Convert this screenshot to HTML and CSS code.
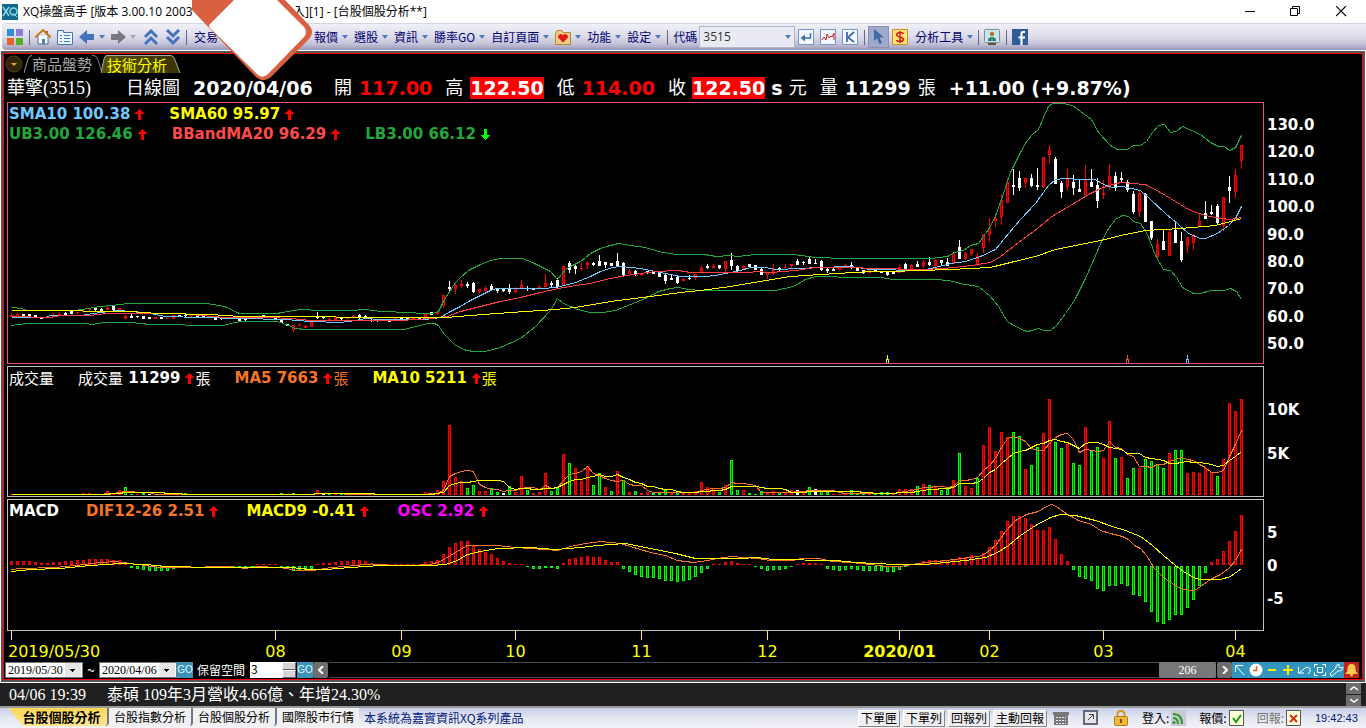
FILE: index.html
```html
<!DOCTYPE html>
<html lang="zh-Hant">
<head>
    <meta charset="UTF-8">
    <meta name="viewport" content="width=device-width, initial-scale=1.0">
    <title>XQ操盤高手</title>
    <link rel="stylesheet" href="styles.css">
</head>
<body>
    <!-- Shared symbols -->
    <svg class="defs" aria-hidden="true">
        <symbol id="up" viewBox="0 0 9 11"><path d="M4 0h1v1h1v1h1v1h1v1h1v1H6v6H3V5H0V4h1V3h1V2h1V1h1z"/></symbol>
        <symbol id="down" viewBox="0 0 9 11"><path d="M3 0h3v6h3v1H8v1H7v1H6v1H5v1H4v-1H3V9H2V8H1V7H0V6h3z"/></symbol>
        <symbol id="caret" viewBox="0 0 7 4"><path d="M0 0h6L3 4z"/></symbol>
    </svg>

    <!-- Title bar -->
    <header class="titlebar">
        <svg class="app-icon" width="16" height="16"><rect width="16" height="16" fill="#0f6a8c"/><path d="M1 3l6 9M7 3l-6 9" stroke="#8fd6ea" stroke-width="1.500"/><circle cx="11.500" cy="7.500" r="3.500" fill="none" stroke="#8fd6ea" stroke-width="1.500"/><path d="M11 9l4 4" stroke="#8fd6ea"/></svg>
        <span class="title-start">XQ操盤高手 [版本 3.00.10 2003</span>
        <span class="title-end">入][1] - [台股個股分析**]</span>
        <div class="window-buttons">
            <button aria-label="最小化"><svg width="12" height="12"><path d="M1 5.500h10" stroke="#000"/></svg></button>
            <button aria-label="還原"><svg width="12" height="12" fill="none" stroke="#000"><path d="M.5 2.500h7v7h-7zM2.500 2.500V.500h7v7H8"/></svg></button>
            <button aria-label="關閉"><svg width="12" height="12"><path d="M0 0l10 10M10 0L0 10" stroke="#000" stroke-width="1.100"/></svg></button>
        </div>
    </header>

    <svg class="logo-overlay" width="130" height="84" viewBox="190 0 130 84"><path fill="#d96142" d="M192 0V10L255 76Q263 84 271 77L309 39Q315 32 309 25L285 0z"/><path fill="#fff" d="M234 0L210 24Q208 26 210 28L258 75Q263 79 268 74L304 37Q308 32 304 27L277 0z"/></svg>

    <!-- Toolbar -->
    <nav class="toolbar">
        <button class="icon" aria-label="主選單"><svg width="16" height="16"><path fill="#2f8fd0" d="M0 0h7v7H0z"/><path fill="#8d7fd0" d="M9 0h7v7H9z"/><path fill="#e0642c" d="M0 9h7v7H0z"/><path fill="#55ae28" d="M9 9h7v7H9z"/></svg></button>
        <i class="sep"></i>
        <button class="icon" aria-label="首頁"><svg width="16" height="16"><path d="M3 7v8h10V7" fill="#fff" stroke="#486a9c"/><path d="M12 2v4" stroke="#a86018" stroke-width="2"/><path d="M0 8.500L8 1l8 7.500" fill="none" stroke="#c67a18" stroke-width="2"/><path d="M7 10h3v5H7z" fill="#4c82be"/></svg></button>
        <button class="icon" aria-label="清單"><svg width="16" height="16"><path d="M.5 1.500h6v2h9v12H.5z" fill="#eef6ff" stroke="#3f78b8"/><path d="M3 6.500h2m2 0h6M3 9.500h2m2 0h6M3 12.500h2m2 0h6" stroke="#3f78b8"/></svg></button>
        <button class="icon history" aria-label="上一頁"><svg width="16" height="14"><path d="M0 7l8-7v4h7v6H8v4z" fill="#4470bc"/></svg><svg class="caret"><use href="#caret"/></svg></button>
        <button class="icon history off" aria-label="下一頁"><svg width="16" height="14"><path d="M16 7L8 0v4H1v6h7v4z" fill="#78787e"/></svg><svg class="caret"><use href="#caret"/></svg></button>
        <button class="icon jump" aria-label="往上"><svg width="14" height="16" fill="none" stroke="#4470bc" stroke-width="3"><path d="M1 8l6-6 6 6M1 15l6-6 6 6"/></svg></button>
        <button class="icon jump" aria-label="往下"><svg width="14" height="16" fill="none" stroke="#4470bc" stroke-width="3"><path d="M1 1l6 6 6-6M1 8l6 6 6-6"/></svg></button>
        <i class="sep"></i>
        <button class="menu trade">交易</button>
        <button class="menu">報價<svg class="caret"><use href="#caret"/></svg></button>
        <button class="menu">選股<svg class="caret"><use href="#caret"/></svg></button>
        <button class="menu">資訊<svg class="caret"><use href="#caret"/></svg></button>
        <button class="menu">勝率GO<svg class="caret"><use href="#caret"/></svg></button>
        <button class="menu">自訂頁面<svg class="caret"><use href="#caret"/></svg></button>
        <button class="menu" aria-label="我的最愛"><svg width="16" height="15"><path d="M.5 3.500v11h15V2.500H8l-1-2H2z" fill="#f1cc85" stroke="#b98534"/><path d="M8 12.500L3.500 8a2.200 2.200 0 0 1 4.500-2.500A2.200 2.200 0 0 1 12.500 8z" fill="#e01818"/></svg><svg class="caret"><use href="#caret"/></svg></button>
        <button class="menu">功能<svg class="caret"><use href="#caret"/></svg></button>
        <button class="menu">設定<svg class="caret"><use href="#caret"/></svg></button>
        <i class="sep"></i>
        <label for="symbol">代碼</label>
        <div class="combo"><input id="symbol" value="3515"><svg class="caret"><use href="#caret"/></svg></div>
        <button class="icon tool" aria-label="輸入"><svg width="16" height="16"><path d="M.5.500h15v15H.5z" fill="#f3f8ff" stroke="#7197c8"/><path d="M12.500 4v5H4" fill="none" stroke="#3e6eb0" stroke-width="1.500"/><path d="M7 5.500v7L2.500 9z" fill="#3e6eb0"/></svg></button>
        <button class="icon tool" aria-label="走勢圖"><svg width="16" height="16"><path d="M.5.500h15v15H.5z" fill="#f3f8ff" stroke="#7197c8"/><path d="M2 11l2-3 2 3 1-6 2 4 2-2 1 1 2-4v7" fill="none" stroke="#c81c1c"/></svg></button>
        <button class="icon tool" aria-label="K線圖"><svg width="16" height="16"><path d="M.5.500h15v15H.5z" fill="#f3f8ff" stroke="#7197c8"/><path d="M5 3v10M12 3L6 8.500 12 13" fill="none" stroke="#3e6eb0" stroke-width="1.800"/></svg></button>
        <i class="sep"></i>
        <button class="icon pressed" aria-label="游標"><svg width="12" height="16"><path d="M1 0v12l3-3 2.500 6 2.500-1-2.500-5.500H11z" fill="#3e69a8"/></svg></button>
        <button class="icon" aria-label="下單"><svg width="16" height="16"><path d="M.5.500h15v15H.5z" fill="#ffe479" stroke="#cf8a20"/><path d="M11.500 5Q11 3.500 8 3.500T4.500 6Q5 7.500 8 8t3.500 2.500Q11 12.500 8 12.500T4.500 11M8 2v12" fill="none" stroke="#d42010" stroke-width="1.500"/></svg></button>
        <button class="menu tools">分析工具<svg class="caret"><use href="#caret"/></svg></button>
        <i class="sep"></i>
        <button class="icon" aria-label="客服"><svg width="16" height="16"><rect x=".5" y=".5" width="15" height="13" rx="1" fill="#c7e8ee" stroke="#8a8a86"/><circle cx="8" cy="5" r="2.200" fill="#b86f3e"/><path d="M4 12q0-4 4-4t4 4z" fill="#267098"/><path d="M8 8v4" stroke="#3caa4a" stroke-width="2"/><path d="M4 15h8" stroke="#55554f" stroke-width="2"/></svg></button>
        <i class="sep"></i>
        <button class="icon" aria-label="Facebook"><svg width="16" height="16"><path fill="#315a9b" d="M0 0h16v16H0z"/><path d="M13 3h-2Q9.500 3 9.500 5v11M6.500 8.500H13" fill="none" stroke="#fff" stroke-width="2.200"/></svg></button>
    </nav>

    <main class="frame">
        <div class="page-tabs">
            <button class="tab-menu" aria-label="頁籤選單"><svg width="18" height="18"><circle cx="9" cy="9" r="8" fill="#2e2708" stroke="#4b4218"/><path d="M6 8h6l-3 3z" fill="#e0a824"/></svg></button>
            <button class="page-tab"><svg width="8" height="18"><path d="M0 18L4 4Q5 .5 8 .5" fill="none" stroke="#999"/></svg>商品盤勢<svg width="11" height="18"><path d="M0 .5h2Q5 1 6 5l4 13" fill="none" stroke="#777"/></svg></button>
            <button class="page-tab active"><svg width="6" height="18"><path d="M0 18L3 4Q4 0 6 0v18z" fill="#555000"/><path d="M0 18L3 4Q4 .5 6 .5" fill="none" stroke="#aaa"/></svg><span>技術分析</span><svg width="14" height="18"><path d="M0 0h4Q7 1 8 5l5 13H0z" fill="#3c3700"/><path d="M0 .5h4Q7 1 8 5l5 13" fill="none" stroke="#aaa"/></svg></button>
        </div>

        <div class="quote">
            <span class="stock-name">華擎(3515)</span>
            <span class="period">日線圖</span>
            <b class="date">2020/04/06</b>
            <div>開<b class="rise">117.00</b></div>
            <div>高<b class="limit">122.50</b></div>
            <div>低<b class="rise">114.00</b></div>
            <div class="close">收<b class="limit">122.50</b><b>s</b>元</div>
            <div>量<b>11299</b>張</div>
            <b>+11.00 (+9.87%)</b>
        </div>

        <section class="pane price">
            <div class="plot">
                <svg id="price" viewBox="7 102 1257 262" preserveAspectRatio="none"></svg>
                <div class="legend">
                    <span class="sky">SMA10 100.38<svg class="up"><use href="#up"/></svg></span>
                    <span class="yellow">SMA60 95.97<svg class="up"><use href="#up"/></svg></span>
                </div>
                <div class="legend second">
                    <span class="band">UB3.00 126.46<svg class="up"><use href="#up"/></svg></span>
                    <span class="coral">BBandMA20 96.29<svg class="up"><use href="#up"/></svg></span>
                    <span class="band">LB3.00 66.12<svg class="down"><use href="#down"/></svg></span>
                </div>
            </div>
            <div class="scale"><span>130.0</span><span>120.0</span><span>110.0</span><span>100.0</span><span>90.0</span><span>80.0</span><span>70.0</span><span>60.0</span><span>50.0</span></div>
        </section>

        <section class="pane volume">
            <div class="plot">
                <svg id="volume" viewBox="7 366 1257 131" preserveAspectRatio="none"></svg>
                <div class="legend">
                    <span><em>成交量</em></span>
                    <span><em>成交量</em>&nbsp;11299<svg class="up"><use href="#up"/></svg><em>張</em></span>
                    <span class="orange">MA5 7663<svg class="up"><use href="#up"/></svg><em>張</em></span>
                    <span class="yellow">MA10 5211<svg class="up"><use href="#up"/></svg><em>張</em></span>
                </div>
            </div>
            <div class="scale"><span>10K</span><span>5K</span></div>
        </section>

        <section class="pane macd">
            <div class="plot">
                <svg id="macd" viewBox="7 499 1257 132" preserveAspectRatio="none"></svg>
                <div class="legend wide">
                    <span>MACD</span>
                    <span class="orange">DIF12-26 2.51<svg class="up"><use href="#up"/></svg></span>
                    <span class="yellow">MACD9 -0.41<svg class="up"><use href="#up"/></svg></span>
                    <span class="magenta">OSC 2.92<svg class="up"><use href="#up"/></svg></span>
                </div>
            </div>
            <div class="scale"><span>5</span><span>0</span><span>-5</span></div>
        </section>

        <svg class="time-axis" id="axis"></svg>

        <!-- Date range and scrolling -->
        <div class="range">
            <select class="date-pick" aria-label="開始日期"><option>2019/05/30</option></select>
            <span class="tilde">~</span>
            <select class="date-pick" aria-label="結束日期"><option>2020/04/06</option></select>
            <button class="go">GO</button>
            <label for="margin">保留空間</label>
            <div class="spinner"><input id="margin" value="3"><button aria-label="增加"></button><button aria-label="減少"></button></div>
            <button class="go">GO</button>
            <button class="scroll-btn" aria-label="向左"><svg width="8" height="8"><path d="M6 0L2 4l4 4" fill="none" stroke="#fff" stroke-width="2"/></svg></button>
            <div class="track"><div class="thumb">206</div></div>
            <button class="scroll-btn" aria-label="向右"><svg width="8" height="8"><path d="M2 0l4 4-4 4" fill="none" stroke="#fff" stroke-width="2"/></svg></button>
            <div class="chart-tools">
                <button aria-label="指標"><svg width="16" height="16" fill="none" stroke="#fff"><path d="M3.500 10V3.500H11M4 4l8 9"/></svg></button>
                <button aria-label="時間"><svg width="16" height="16"><circle cx="8" cy="8" r="6.500" fill="#fff"/><path d="M8.500 4v4.500H5" fill="none" stroke="#d8642a" stroke-width="1.500"/></svg></button>
                <button aria-label="縮小"><svg width="16" height="16"><path d="M4 8h8" stroke="#ffee00" stroke-width="2"/></svg></button>
                <button aria-label="放大"><svg width="16" height="16"><path d="M3 8h10M8 3v10" stroke="#ffee00" stroke-width="2"/></svg></button>
                <button aria-label="復原"><svg width="16" height="16" fill="none" stroke="#fff"><path d="M2.500 5v6H8M3 11l6-5q4-2 5 1t-2 5"/></svg></button>
                <button aria-label="全圖"><svg width="16" height="16" fill="none" stroke="#fff"><path d="M2.500 5.500v-3h3M10.500 2.500h3v3M13.500 10.500v3h-3M5.500 13.500h-3v-3M5.500 5.500h5v5h-5z"/></svg></button>
                <button aria-label="設定"><svg width="16" height="16" fill="none" stroke="#fff"><path d="M3 14l-1-2 6-6q-1-3 3-4v3l2 1 2-1q0 4-5 4l-6 5z"/></svg></button>
                <button class="alarm" aria-label="警示"><svg width="15" height="16"><path d="M7.500 2q4 0 4 5 0 3 2 4v1h-12v-1q2-1 2-4 0-5 4-5z" fill="#f7cb52"/><circle cx="7.500" cy="13" r="1.500" fill="#f7cb52"/></svg></button>
            </div>
        </div>
    </main>

    <!-- News ticker -->
    <div class="news">
        <time>04/06 19:39</time>
        <span>泰碩 109年3月營收4.66億、年增24.30%</span>
        <div class="news-scroll">
            <button aria-label="上一則"><svg width="8" height="5"><path d="M0 4l4-3 4 3" fill="none" stroke="#fff" stroke-width="1.500"/></svg></button>
            <button aria-label="下一則"><svg width="8" height="5"><path d="M0 1l4 3 4-3" fill="none" stroke="#fff" stroke-width="1.500"/></svg></button>
        </div>
    </div>

    <!-- Status bar -->
    <footer class="status">
        <div class="sheets">
            <button class="sheet active">台股個股分析</button>
            <button class="sheet">台股指數分析</button>
            <button class="sheet">台股個股分析</button>
            <button class="sheet">國際股市行情</button>
        </div>
        <span class="notice">本系統為嘉實資訊XQ系列產品</span>
        <div class="orders">
            <button>下單匣</button><button>下單列</button><button>回報列</button><button>主動回報</button>
        </div>
        <div class="status-icons">
            <svg width="16" height="16"><path d="M0 2h16v3H0zM1 5h14v10H1z" fill="#77777c"/><path d="M3 7.500h10M3 10.500h10M3 13.500h10" stroke="#eee" stroke-dasharray="2 1"/></svg>
            <svg width="16" height="16"><path d="M1 1h13v13H1z" fill="#e6e6ea" stroke="#686876" stroke-width="2"/><path d="M5 10l5-5M6 4.500h4.500V9" fill="none" stroke="#444"/></svg>
            <svg width="16" height="16"><path d="M4.500 8V4q0-3 3.500-3t3.500 3v4" fill="none" stroke="#d49b22" stroke-width="2"/><rect x="1.500" y="6.500" width="13" height="9" rx="1" fill="#f0b938" stroke="#b67b16"/><path d="M8 9v4" stroke="#7d5308" stroke-width="2"/></svg>
        </div>
        <span class="state">登入:<svg width="15" height="16"><rect width="15" height="16" fill="#c9c9d1"/><path d="M2 4q9 0 9 10M2 8q5 0 5 6" fill="none" stroke="#2c9b2c" stroke-width="2"/><circle cx="3" cy="12.500" r="1.500" fill="#2c9b2c"/></svg></span>
        <span class="state">報價:<svg width="15" height="16"><path d="M.5.500h14v15H.5z" fill="#ffffd8" stroke="#555"/><path d="M4 8l3 4 5-7" fill="none" stroke="#159a15" stroke-width="2"/></svg></span>
        <span class="state idle">回報:<svg width="15" height="16"><path d="M.5.500h14v15H.5z" fill="#ffffd8" stroke="#555"/><path d="M4 5l7 7M11 5l-7 7" stroke="#e02a18" stroke-width="2"/></svg></span>
        <time class="clock">19:42:43</time>
    </footer>
    <script src="script.js"></script>
</body>
</html>
```

FILE: styles.css
```css
* {
    box-sizing: border-box;
}
body {
    margin: 0;
    background-color: #fff;
    font-family: "Noto Sans CJK TC", sans-serif;
    font-size: 12px;
    line-height: 16px;
    position: relative;
}
button, input, select {
    font: inherit;
    color: inherit;
    border: none;
    border-radius: 0;
    padding: 0;
    margin: 0;
    background: none;
}
svg {
    display: block;
    flex: none;
}
.defs {
    position: absolute;
    width: 0;
    height: 0;
}

/* Title bar */
.titlebar {
    display: flex;
    align-items: center;
    height: 23px;
    padding: 0 14px 0 2px;
    font-family: "Open Sans", "Noto Sans CJK TC", sans-serif;
    white-space: nowrap;
}
.title-start {
    width: 272px;
    padding-left: 5px;
}
.title-end {
    flex: 1;
    padding-left: 3px;
}
.window-buttons {
    display: flex;
    gap: 34px;
    padding-right: 4px;
}
.logo-overlay {
    position: absolute; /* Floats over the title, menu and tabs */
    left: 190px;
    top: 0;
    z-index: 2;
}

/* Toolbar */
.toolbar {
    display: flex;
    align-items: center;
    height: 27px;
    padding-left: 7px;
    margin-left: 2px;
    border-top: 1px solid #d4d4e4;
    border-radius: 4px 0 0 4px;
    background: linear-gradient(#f0f0f9, #dedeeb 45%, #c6c5d9 75%, #9b97b8);
    color: #00006e;
    white-space: nowrap;
}
.toolbar .icon {
    margin-right: 6px;
}
.toolbar .icon:first-child {
    margin-left: -2px;
}
.toolbar .history {
    display: flex;
    align-items: center;
    gap: 4px;
    margin-right: 4px;
}
.toolbar .jump {
    margin: 0 0 0 8px;
}
.toolbar .history + .jump {
    margin-left: 3px;
}
.toolbar .tool {
    margin: 0 0 0 6px;
}
.sep {
    width: 1px;
    height: 15px;
    margin: 0 5px 0 0;
    background-color: #66668e;
}
.jump + .sep, .tool + .sep {
    margin-left: 6px;
}
.menu {
    display: flex;
    align-items: center;
    gap: 4px;
    margin-right: 5px;
}
.trade {
    width: 117px;
    padding-left: 2px;
}
.tools {
    margin: 0 4px 0 1px;
}
.caret {
    width: 7px;
    height: 4px;
    fill: #5579b4;
}
.off .caret {
    fill: #aaa;
}
.combo {
    display: flex;
    align-items: center;
    width: 96px;
    height: 22px;
    margin: 0 -3px 0 2px;
    padding: 0 2px 0 3px;
    background-color: #eaeaf4;
    border: 1px solid #b5b5cc;
    color: #333;
    font-family: "Open Sans", sans-serif;
}
.combo input {
    flex: 1;
    min-width: 0;
}
.pressed {
    display: flex;
    justify-content: center;
    align-items: center;
    width: 21px;
    height: 22px;
    background-color: #9fa9cc;
    border: 1px solid #8b90b4;
}
.toolbar .pressed {
    margin-left: -2px;
    margin-right: 3px;
}

/* Chart frame */
.frame {
    margin: 3px 3px 0 3px;
    padding-left: 3px;
    border: 1px solid #ff0000;
    outline: 2px solid #555;
    background-color: #000;
    color: #fff;
}
.page-tabs {
    display: flex;
    align-items: center;
    height: 20px;
    margin-left: -2px;
}
.page-tab {
    display: flex;
    align-items: center;
    height: 18px;
    margin-left: 1px;
    font-size: 15px;
    line-height: 18px;
    color: #aaa;
}
.page-tab.active {
    color: #ffff00;
    margin-left: -2px;
}
.page-tab.active span {
    background: linear-gradient(90deg, #555000, #3c3700);
    border-top: 1px solid #aaa;
    height: 18px;
    line-height: 17px;
}
.quote {
    display: flex;
    align-items: center;
    gap: 13px;
    height: 28px;
    font-family: "Liberation Serif", "Noto Sans CJK TC", serif;
    font-size: 18px;
    line-height: 22px;
    white-space: nowrap;
}
.quote div {
    display: flex;
    gap: 7px;
}
.quote .close {
    gap: 6px;
}
.quote b {
    font-family: "DejaVu Sans", sans-serif;
    font-size: 19px;
}
.stock-name {
    width: 106px;
}
.quote .date {
    min-width: 128px;
}
.quote .rise {
    color: #ff0000;
    min-width: 71px;
}
.quote .limit {
    background-color: #ff0000;
    min-width: 73px;
}

/* Chart panes */
.pane {
    display: flex;
    margin-bottom: 2px;
}
.plot {
    flex: 1;
    position: relative;
}
.plot > svg {
    width: 100%;
    height: 100%;
    shape-rendering: crispEdges;
    outline: 1px solid #c0c0c0;
    outline-offset: -1px;
}
.price .plot > svg {
    outline-color: #f04c92;
}
.price {
    height: 262px;
}
.volume {
    height: 131px;
}
.macd {
    height: 132px;
    margin-bottom: 0;
}
.legend {
    position: absolute;
    top: 2px;
    left: 2px;
    display: flex;
    gap: 24px;
    height: 20px;
    font: bold 15px/20px "DejaVu Sans", sans-serif;
}
.second {
    top: 22px;
}
.wide {
    gap: 27px;
}
.legend span {
    display: flex;
    align-items: center;
    white-space: nowrap;
}
.legend em {
    font: normal 15px/20px "Noto Sans CJK TC", sans-serif;
}
.legend svg {
    width: 9px;
    height: 11px;
    margin: 0 1px 0 5px;
}
.up {
    fill: #ff0000;
}
.down {
    fill: #00ff00;
}
.sky {
    color: #6fc8ff;
}
.yellow {
    color: #ffff00;
}
.band {
    color: #22a83a;
}
.coral {
    color: #ff4a4a;
}
.orange {
    color: #f57428;
}
.magenta {
    color: #ff00ff;
}
.scale {
    display: flex;
    flex-direction: column;
    width: 98px;
    padding: 14px 0 11px 3px;
    justify-content: space-between;
    font: bold 15px/18px "DejaVu Sans", sans-serif;
}
.volume .scale {
    justify-content: flex-start;
    gap: 26px;
    padding-top: 35px;
}
.macd .scale {
    justify-content: flex-start;
    gap: 15px;
    padding-top: 25px;
}
.time-axis {
    width: calc(100% - 98px);
    height: 31px;
    font: 16px "DejaVu Sans", sans-serif;
    fill: #ffff00;
    shape-rendering: crispEdges;
}

/* Date range row */
.range {
    display: flex;
    align-items: center;
    height: 16px;
    margin: 0 3px 1px -2px;
}
.date-pick {
    appearance: none;
    width: 78px;
    height: 16px;
    padding-left: 2px;
    border: 1px solid #777;
    background:
        linear-gradient(#000, #000) 64px 6px / 5px 1px no-repeat,
        linear-gradient(#000, #000) 65px 7px / 3px 1px no-repeat,
        linear-gradient(#000, #000) 66px 8px / 1px 1px no-repeat,
        linear-gradient(#e6e6e6, #e6e6e6) 59px 0 / 16px 14px no-repeat,
        #fff;
    color: #000;
    font: 12px/14px "Liberation Serif", serif;
}
.tilde {
    width: 16px;
    text-align: center;
    font-size: 14px;
}
.go {
    width: 16px;
    height: 16px;
    background-color: #3a94b8;
    color: #e4f6ff;
    font: 10px/16px "Liberation Sans", sans-serif;
}
.range label {
    width: 57px;
    padding-left: 4px;
}
.spinner {
    display: grid;
    grid-template-columns: 1fr 14px;
    width: 46px;
    height: 16px;
    margin-right: 1px;
    background-color: #fff;
    color: #000;
}
.spinner input {
    grid-row: span 2;
    width: 100%;
    height: 13px;
    padding-left: 1px;
    line-height: 12px;
}
.spinner button {
    background-color: #d4d4d4;
    border: 1px solid;
    border-color: #fff #666 #666 #fff;
}
.scroll-btn {
    display: flex;
    align-items: center;
    justify-content: center;
    width: 15px;
    height: 16px;
    background-color: #6d6d6d;
    border-radius: 2px;
}
.track {
    flex: 1;
    display: flex;
    justify-content: flex-end;
    height: 16px;
    margin: 0 1px;
    border: 1px solid #4a4a4a;
    border-width: 1px 0;
}
.thumb {
    width: 57px;
    margin: -1px 0;
    background-color: #777;
    border-radius: 2px;
    text-align: center;
    font-family: "Liberation Serif", serif;
}
.chart-tools {
    display: flex;
}
.chart-tools button {
    width: 16px;
    height: 16px;
    background-color: #3394bd;
}
.chart-tools .alarm {
    width: 15px;
    background-color: #c3221c;
}

/* News ticker */
.news {
    display: flex;
    align-items: center;
    gap: 21px;
    height: 26px;
    margin-top: 2px;
    padding: 0 5px 0 9px;
    border-top: 1px solid #fff;
    border-bottom: 2px solid #999;
    background-color: #202020;
    color: #fff;
    font: 16px/22px "Liberation Serif", "Noto Sans CJK TC", serif;
    white-space: nowrap;
}
.news-scroll {
    display: flex;
    flex-direction: column;
    gap: 1px;
    margin-left: auto;
}
.news-scroll button {
    display: flex;
    align-items: center;
    justify-content: center;
    width: 15px;
    height: 11px;
    background-color: #6d6d6d;
}

/* Status bar */
.status {
    display: flex;
    align-items: center;
    height: 20px;
    padding: 0 7px 0 8px;
    background: linear-gradient(#c7cee8, #e4e6f1 50%, #f3f3f8);
    white-space: nowrap;
    color: #000;
}
.sheets {
    display: flex;
    height: 18px;
    align-self: flex-start;
}
.sheet {
    width: 84px;
    background-color: #f1f1f1;
    border-right: 2px solid #6d7695;
    border-radius: 0 0 4px 4px;
}
.sheet:last-child {
    border-right: none;
    width: 82px;
}
.sheet.active {
    width: 101px;
    padding-left: 8px;
    font-weight: bold;
    font-size: 13px;
    background: linear-gradient(#ffd552, #ffe894);
    clip-path: polygon(0 0, 100% 0, 100% 100%, 15px 100%);
}
.notice {
    flex: 1;
    padding-left: 5px;
    color: #00207c;
}
.orders {
    display: flex;
    gap: 3px;
}
.orders button {
    height: 17px;
    padding: 0 2px;
    background-color: #efeff2;
    border: 1px solid;
    border-color: #fff #888 #888 #fff;
    line-height: 14px;
}
.status-icons {
    display: flex;
    gap: 14px;
    margin: 0 13px 0 6px;
}
.state {
    display: flex;
    align-items: center;
    gap: 2px;
    margin-right: 13px;
}
.idle {
    color: #777;
}
.clock {
    width: 45px;
    padding-left: 1px;
    color: #00207c;
    font: 11px/16px "Liberation Sans", sans-serif;
}
```

FILE: script.js
```js
const NS = 'http://www.w3.org/2000/svg';
const START = 11; // x of the first trading day
const STEP = 6;   // distance between days
const COLORS = { r: '#ff0000', g: '#00ff00', w: '#ffffff' };
const INNER = { r: '#900000', g: '#007800', w: '#ffffff' };

// colour + high, body top, body bottom, low
const candles = `r313,315,316,316 r313,314,316,316 w314,314,316,316 w314,314,316,316 w315,315,316,316 w318,318,318,318 r316,316,316,316 r313,316,316,316
r312,314,315,315 w312,313,314,315 w311,311,313,313 r312,312,312,313 r309,311,311,312 r309,309,309,310 w308,308,309,310 w308,309,310,311
r306,308,309,309 w306,306,309,310 r308,308,309,309 r315,316,318,318 w314,316,317,317 w316,316,316,317 w316,316,318,318 w317,317,318,318
r317,317,318,318 w317,317,318,318 r318,318,318,318 r315,315,318,318 w315,315,315,316 w314,315,315,316 r314,315,315,316 w315,315,316,316
w316,316,316,316 w316,316,317,317 w318,318,319,319 w317,318,318,319 w318,318,318,318 w318,318,318,318 w318,318,320,320 w318,319,319,320
w318,318,318,318 r316,316,317,317 w315,315,316,316 w317,317,317,317 w318,318,318,318 w319,319,322,322 w324,324,325,325 r325,325,329,331
r323,325,325,325 r325,326,327,327 r322,322,326,326 w312,317,317,318 w316,317,317,318 r318,319,320,321 r317,317,319,319 w317,317,318,320
r317,318,318,318 r315,316,317,317 w314,315,317,318 w315,316,316,318 w319,320,320,321 w319,320,320,321 w320,320,320,320 w320,320,321,321
r317,318,318,318 w317,317,318,318 w318,318,318,319 r318,318,318,318 w317,317,318,319 r314,314,317,317 w312,312,314,314 r312,312,313,314
r295,295,305,307 w281,287,288,291 r283,285,288,293 r280,284,285,287 w282,284,285,287 w282,283,291,292 r289,289,291,293 r286,288,290,291
w284,286,289,289 w288,289,290,292 w289,289,290,291 w284,288,291,293 r287,288,291,292 r280,285,288,288 w286,288,288,290 w288,288,289,289
r285,287,288,288 r274,283,286,286 w281,283,284,286 w278,280,286,287 r266,266,285,285 w261,263,269,272 w263,266,268,273 r263,268,268,270
r261,263,264,268 w262,263,264,265 w255,261,265,265 w262,262,264,267 w263,263,265,265 w253,261,265,265 w262,263,274,275 r269,271,273,273
w270,271,274,275 r273,273,274,275 w271,271,272,273 w271,271,273,273 w272,272,276,276 w273,275,280,283 w275,278,279,279 w276,277,282,283
r278,279,280,280 w275,278,278,279 r274,274,277,279 r266,268,272,272 w264,266,267,268 r264,266,267,267 w265,265,267,268 r261,261,268,271
w253,260,265,269 w265,266,270,271 r265,266,268,269 w264,264,266,266 w265,265,269,269 w268,269,274,274 r272,272,274,278 r264,269,273,274
w267,268,268,270 r264,267,267,267 r264,264,265,267 w259,261,264,264 w261,262,262,264 w257,259,263,263 w259,263,263,263 w260,261,269,270
w268,269,270,272 w268,269,270,270 r267,267,269,269 r264,265,266,266 w262,265,267,268 w267,268,270,270 w270,270,272,273 r269,269,272,272
w269,269,270,270 w271,271,272,272 w271,271,274,275 w272,272,273,273 r265,267,272,272 w263,264,268,269 r264,265,268,268 w261,264,266,266
r260,262,265,267 w257,262,264,265 r259,260,265,267 w260,260,262,264 w258,262,265,265 r252,253,263,263 w240,247,258,258 r252,253,258,259
r249,249,253,255 r253,256,264,265 r234,234,247,252 r218,228,234,241 r214,218,220,226 r194,200,216,224 r178,182,202,202 w169,185,186,194
w171,178,187,190 r178,178,182,187 w174,178,185,186 w168,185,186,189 r157,157,186,187 r145,150,154,163 w157,159,183,183 w181,183,191,197
r169,179,186,190 w175,182,187,194 w180,189,191,191 r165,179,194,194 w169,182,186,186 w178,185,200,207 r180,193,194,198 r164,176,186,189
w172,176,187,190 w172,178,179,181 w180,182,189,191 w191,194,211,213 r191,193,211,216 w193,194,221,221 w221,221,237,239 r239,244,257,257
w230,241,249,249 r230,232,255,255 w223,230,242,242 w232,241,259,261 r237,237,245,252 r234,236,242,249 r214,221,225,225 w201,213,218,218
w205,212,213,214 w204,206,222,223 r197,197,225,230 w176,187,190,202 r169,175,191,197 r145,145,160,168`.split(/\s+/);

const volumes = `r1 r1 r1 r1 r1 r1 r1 r1 r1 r1 r1 r1 r2 r2 r1 r1 r4 r2 r5 g8 g1 r1 g2 w1 r1 r1 r1 r1 r1 g2
r1 r1 r1 r1 r1 r1 r1 r1 r1 r1 r1 r1 r1 r1 r1 g2 r1 g2 r1 r1 r1 r5 w1 g2 r2 g1 r1 r1 r1 r1 r1 r1 r1 r1 r1 r1 r1 r1 r1
r3 w2 r5 r14 r70 r18 r14 g7 g10 r4 r4 g7 g3 w2 g9 r3 r19 g5 r2 r3 r22 g4 g7 r41 g32 r27 r14 r29 g10 g22 r8 g4 r24 g15
r3 g4 r2 r3 g2 g2 g5 r3 g3 r2 r3 r4 r13 r8 r7 g3 r10 g35 g5 r5 g2 g1 g4 r2 r4 g3 r3 r5 w5 r3 g8 w6 g5 g3 r1 r1 r2 g5
g2 g1 r2 g2 g3 g3 r2 r6 r6 r6 g9 r11 g10 r8 g5 g6 r15 g42 r9 r7 g17 r50 r68 r44 r63 r58 g63 g59 r26 g30 g48 r62 r96
g53 g47 r51 g32 g30 r68 g44 g48 r37 r74 g37 r38 g17 g27 r27 g36 g34 g31 g27 r42 g45 g45 r22 r23 r22 r27 r23 g19 r36
r92 r84 r96`.split(/\s+/);

const osc = [4,4,4,4,3,2,2,3,3,4,4,5,5,6,6,6,6,5,5,1,-2,-3,-4,-5,-5,-5,-5,-3,-1,0,0,0,0,0,0,0,-1,-1,-1,-1,-1,1,1,1,1,
    -1,-2,-5,-4,-4,-3,1,2,2,3,4,4,5,5,4,2,1,1,1,1,1,1,1,1,3,4,5,11,18,22,24,24,19,16,13,11,7,4,2,1,1,-1,-3,-3,-2,-2,-3,
    2,6,7,8,9,8,8,5,3,3,-3,-6,-9,-11,-12,-12,-13,-15,-15,-16,-15,-14,-11,-7,-3,1,1,3,4,2,1,1,-1,-3,-5,-4,-4,-3,-1,1,2,2,2,1,
    -3,-4,-5,-4,-3,-4,-5,-5,-5,-5,-6,-6,-4,-1,1,1,4,5,5,5,5,6,8,8,10,7,12,18,25,34,44,49,49,47,41,35,35,38,26,11,4,
    -4,-11,-13,-15,-23,-25,-20,-20,-18,-20,-29,-30,-36,-46,-56,-58,-54,-49,-49,-42,-34,-20,-7,3,6,14,24,34,50];

const lines = {
    upper: '11,307 21,308 27,310 74,310 82,309 100,306 111,305 128,303 206,303 224,306 239,313 276,313 288,311 300,309 320,310 350,310 365,309 380,311 410,312 420,313 432,313 438,311 444,299 455,282 460,277 468,270 480,264 490,260 500,258 522,258 532,262 540,266 550,271 557,279 565,269 572,265 580,261 590,253 600,248 606,246 618,243 630,245 645,247 658,251 675,254 704,254 716,256 730,255 737,256 755,254 793,254 815,257 845,258 930,258 947,256 954,252 963,250 970,245 978,243 990,226 996,213 1002,196 1010,172 1020,152 1026,141 1032,134 1038,129 1043,117 1048,106 1052,103 1063,103 1072,105 1080,111 1091,119 1098,132 1110,145 1117,149 1127,149 1133,145 1140,145 1146,141 1152,132 1158,125 1164,124 1170,132 1176,131 1182,126 1200,134 1210,142 1218,146 1224,146 1229,150 1235,147 1241,135',
    lower: '11,325 27,323 85,323 92,324 104,322 130,322 150,324 180,324 188,325 222,325 235,322 240,321 277,321 288,325 295,328 305,329 404,329 415,326 428,323 434,323 438,325 444,334 455,345 466,350 474,351 485,351 500,347 520,338 535,326 550,310 557,298 563,303 577,309 590,312 602,312 615,310 635,302 645,298 658,291 670,288 678,287 688,289 700,290 775,290 793,286 805,279 815,276 860,277 880,277 893,279 935,279 948,280 965,284 978,286 990,296 998,306 1007,321 1015,326 1026,331 1032,330 1038,328 1044,330 1050,330 1056,325 1065,313 1075,298 1085,278 1093,260 1100,243 1108,228 1115,219 1122,215 1128,216 1133,221 1140,223 1147,234 1155,255 1163,269 1170,270 1176,277 1182,287 1193,293 1200,293 1210,290 1224,290 1230,288 1236,291 1241,299',
    sma10: '11,317 45,317 50,315 80,315 100,312 118,310 130,311 150,313 165,316 200,317 240,318 285,319 310,321 340,322 355,320 365,318 380,319 425,319 440,317 450,311 460,306 470,300 480,295 490,290 496,288 545,288 560,286 575,282 590,276 600,271 612,267 620,266 640,268 660,272 670,274 680,276 705,276 715,275 730,272 740,270 750,267 765,267 775,269 800,268 818,267 850,266 870,269 920,270 935,267 950,263 965,261 980,256 995,249 1008,233 1020,219 1035,203 1048,185 1055,179 1065,178 1080,179 1095,179 1103,184 1112,187 1122,186 1140,190 1150,199 1165,213 1178,224 1188,233 1200,238 1205,238 1217,233 1228,225 1235,218 1241,206',
    ma20: '11,316 50,317 60,315 90,315 105,313 180,313 200,315 225,317 270,317 290,318 310,320 350,320 400,320 430,318 447,316 460,311 480,306 500,301 520,297 540,292 558,288 575,285 590,283 605,279 620,276 640,273 655,271 678,270 690,272 750,272 755,271 770,272 795,270 815,267 855,267 870,268 925,269 955,267 978,264 990,262 1000,256 1018,242 1037,228 1050,217 1070,205 1090,193 1100,188 1112,184 1120,182 1145,184 1160,192 1175,201 1190,210 1205,215 1220,218 1230,219 1241,217',
    sma60: '11,310 80,310 85,311 135,311 140,312 160,313 210,314 240,316 430,317 445,317 470,315 510,312 555,309 575,307 610,301 650,296 680,292 700,290 730,286 760,281 790,276 820,274 870,271 890,271 950,269 990,267 1010,262 1035,256 1055,249 1080,244 1100,240 1125,234 1145,230 1180,228 1215,225 1230,221 1241,218',
    dif: '11,569 20,568 55,567 75,565 100,562 115,561 130,563 145,565 160,567 180,567 230,566 245,568 255,566 280,567 297,570 313,570 330,567 345,566 365,564 410,565 430,564 440,561 450,555 460,549 467,545 497,545 515,547 545,549 557,550 570,546 585,543 600,541 620,543 630,546 650,552 665,555 677,560 693,562 707,560 723,557 732,556 743,557 757,558 770,560 793,560 800,558 818,558 832,561 850,562 870,564 887,566 900,566 917,563 945,560 978,556 985,553 995,545 1005,531 1015,520 1026,514 1038,511 1046,506 1051,504 1056,506 1064,512 1078,520 1091,524 1100,530 1110,533 1122,536 1128,539 1134,545 1140,548 1146,555 1154,568 1163,577 1172,583 1182,589 1194,590 1200,586 1210,579 1220,574 1228,568 1235,560 1241,549',
    signal: '11,571 30,569 60,568 90,565 120,563 145,564 165,566 215,567 290,567 310,569 325,569 350,567 380,565 430,565 445,564 457,560 467,554 480,551 497,548 530,547 555,549 580,547 597,545 625,543 640,546 655,549 675,553 695,558 720,558 740,558 757,557 772,559 835,560 855,562 895,564 925,564 945,562 965,560 985,557 997,552 1008,545 1020,535 1035,525 1050,517 1060,514 1075,515 1095,520 1112,526 1125,530 1140,536 1152,545 1163,555 1175,565 1183,571 1195,578 1200,579 1220,579 1230,576 1241,568'
};

const months = [[11, '2019/05/30'], [275, '08'], [401, '09'], [515, '10'], [641, '11'], [767, '12'],
    [899, '2020/01'], [989, '02'], [1103, '03'], [1235, '04']];

function add(parent, tag, attrs) {
    const el = document.createElementNS(NS, tag);
    for (const key in attrs) el.setAttribute(key, attrs[key]);
    parent.appendChild(el);
    return el;
}

// Three pixel wide bar with a darker core
function bar(svg, x, top, height, color) {
    add(svg, 'rect', { x: x - 1, y: top, width: 3, height: height, fill: COLORS[color] });
    if (height > 2) {
        add(svg, 'rect', { x: x, y: top + 1, width: 1, height: height - 2, fill: INNER[color] });
    }
}

function line(svg, points, color) {
    add(svg, 'polyline', { points: points, fill: 'none', stroke: color, transform: 'translate(.5 .5)' });
}

// Moving average of the volume bars
function average(values, days) {
    return values.map((v, i) => {
        const part = values.slice(Math.max(0, i - days + 1), i + 1);
        const mean = part.reduce((a, b) => a + b, 0) / part.length;
        return (START + i * STEP) + ',' + Math.round(495 - mean);
    }).join(' ');
}

const price = document.getElementById('price');
candles.forEach((c, i) => {
    const [high, top, bottom, low] = c.slice(1).split(',').map(Number);
    const x = START + i * STEP;
    add(price, 'rect', { x: x, y: high, width: 1, height: low - high + 1, fill: COLORS[c[0]] });
    bar(price, x, top, bottom - top + 1, c[0]);
});
line(price, lines.upper, '#22a83a');
line(price, lines.lower, '#22a83a');
line(price, lines.sma10, '#6fc8ff');
line(price, lines.ma20, '#ff4040');
line(price, lines.sma60, '#ffff00');
[[887, '#ffff00'], [1127, '#ff4a4a'], [1187, '#6fc8ff']].forEach(([x, color]) => {
    add(price, 'path', { d: `M${x} 355h1v4h1v4h-1v-3h-1v3h-1v-4h1z`, fill: color });
});

const volume = document.getElementById('volume');
const sizes = volumes.map(v => Number(v.slice(1)));
volumes.forEach((v, i) => bar(volume, START + i * STEP, 495 - sizes[i], sizes[i], v[0]));
line(volume, average(sizes, 5), '#f57428');
line(volume, average(sizes, 10), '#ffff00');

const macd = document.getElementById('macd');
osc.forEach((v, i) => {
    if (v > 0) bar(macd, START + i * STEP, 565 - v, v, 'r');
    if (v < 0) bar(macd, START + i * STEP, 566, -v, 'g');
});
line(macd, lines.dif, '#f57428');
line(macd, lines.signal, '#ffff00');

const axis = document.getElementById('axis');
months.forEach(([x, name], i) => {
    const left = (x - 6.5) / 1257 * 100 + '%';
    add(axis, 'line', { x1: left, x2: left, y1: 0, y2: 9, stroke: '#ffff00' });
    const label = add(axis, 'text', { x: i ? left : 1, y: 26, 'text-anchor': i ? 'middle' : 'start' });
    if (name === '2020/01') label.setAttribute('font-weight', 'bold');
    label.textContent = name;
});
```
